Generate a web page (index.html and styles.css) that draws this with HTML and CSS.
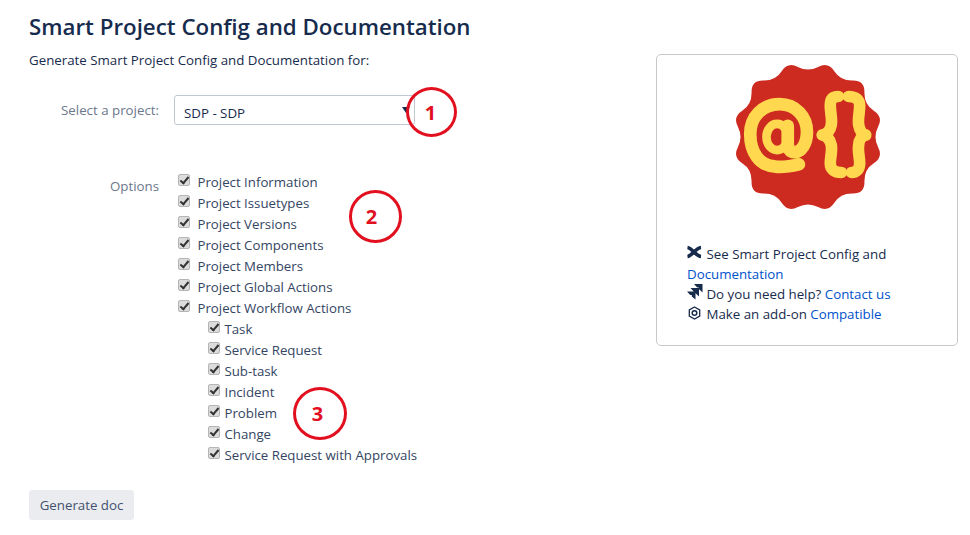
FILE: index.html
```html
<!DOCTYPE html>
<html lang="en">

<head>
  <meta charset="UTF-8">
  <title>Smart Project Config and Documentation</title>
  <link rel="stylesheet" href="styles.css">
</head>

<body>
  <div class="page">
    <div class="main">
      <h1>Smart Project Config and Documentation</h1>
      <p class="intro">Generate Smart Project Config and Documentation for:</p>
      <form class="doc-form">
        <div class="field-row">
          <label class="field-label select-label" for="project">Select a project:</label>
          <div class="select-wrap">
            <select id="project" class="project-select">
              <option>SDP - SDP</option>
            </select>
          </div>
        </div>
        <div class="field-row options-row">
          <div class="field-label options-label">Options</div>
          <div class="options">
            <label class="option"><input type="checkbox" checked> Project Information</label>
            <label class="option"><input type="checkbox" checked> Project Issuetypes</label>
            <label class="option"><input type="checkbox" checked> Project Versions</label>
            <label class="option"><input type="checkbox" checked> Project Components</label>
            <label class="option"><input type="checkbox" checked> Project Members</label>
            <label class="option"><input type="checkbox" checked> Project Global Actions</label>
            <label class="option"><input type="checkbox" checked> Project Workflow Actions</label>
            <div class="sub-options">
              <label class="option"><input type="checkbox" checked> Task</label>
              <label class="option"><input type="checkbox" checked> Service Request</label>
              <label class="option"><input type="checkbox" checked> Sub-task</label>
              <label class="option"><input type="checkbox" checked> Incident</label>
              <label class="option"><input type="checkbox" checked> Problem</label>
              <label class="option"><input type="checkbox" checked> Change</label>
              <label class="option"><input type="checkbox" checked> Service Request with Approvals</label>
            </div>
          </div>
        </div>
        <button type="button" class="generate">Generate doc</button>
      </form>
    </div>

    <div class="info-panel">
      <svg class="logo" viewBox="-75 -75 150 150" width="152" height="152">
        <path fill="#cd2a20" d="M10,-69.2 Q19.9,-74.4 26,-64.9 Q32,-55.4 44,-55.7 Q56,-56 55.7,-44 Q55.4,-32 64.9,-26 Q74.4,-19.9 69.2,-10 Q64,0 69.2,10 Q74.4,19.9 64.9,26 Q55.4,32 55.7,44 Q56,56 44,55.7 Q32,55.4 26,64.9 Q19.9,74.4 10,69.2 Q0,64 -10,69.2 Q-19.9,74.4 -26,64.9 Q-32,55.4 -44,55.7 Q-56,56 -55.7,44 Q-55.4,32 -64.9,26 Q-74.4,19.9 -69.2,10 Q-64,0 -69.2,-10 Q-74.4,-19.9 -64.9,-26 Q-55.4,-32 -55.7,-44 Q-56,-56 -44,-55.7 Q-32,-55.4 -26,-64.9 Q-19.9,-74.4 -10,-69.2 Q0,-64 10,-69.2Z" />
        <g fill="none" stroke="#ffd84f" stroke-linecap="round" stroke-linejoin="round">
          <path stroke-width="12.5" d="M-9,27 C-18,29 -27,30 -33,29 C-48,28 -57,15 -57,-3 C-57,-20 -45,-32.5 -28,-32.5 C-12,-32.5 -1,-20 -1,-5 C-1,7 -7,15 -13,15 C-18,15 -20,11 -20,6 L-20,-11" />
          <ellipse stroke-width="8.5" cx="-30.5" cy="0" rx="10.5" ry="13" />
          <path stroke-width="11.5" d="M30,-40 C24,-40 22,-37 22,-31 C22,-24 24,-18 23,-12 C22,-6 19,-3 14,-2 C19,-1 22,3 23,8 C24,14 22,20 22,26 C22,32 26,35 33,35" />
          <path stroke-width="11.5" d="M40,-40 C47,-40 51,-37 51,-31 C51,-24 49,-18 50,-12 C51,-6 53,-3 57,-2 C53,-1 50,3 50,8 C49,14 51,20 51,26 C51,32 48,35 43,35" />
        </g>
      </svg>
      <div class="links">
        <div>
          <svg class="link-icon" viewBox="0 0 16 16" width="16" height="16">
            <path fill="none" stroke="#172b4d" stroke-width="3.6" d="M0.5,3.5 C5,4 8.5,12 14,12.5 M0.5,12.5 C5,12 8.5,4 14,3.5" />
          </svg>
          See Smart Project Config and <a href="#">Documentation</a>
        </div>
        <div>
          <svg class="link-icon" viewBox="0 0 16 16" width="16" height="16">
            <path fill="#172b4d" d="M7,0 H15.5 V8.5 L11.8,5 V3.4 H10.2Z M3.5,4 H12 V12.5 L8.3,9 V7.4 H6.7Z M0,7.5 H8.5 V15.5 L4.8,12.5 V10.9 H3.2Z" />
          </svg>
          Do you need help? <a href="#">Contact us</a>
        </div>
        <div>
          <svg class="link-icon" viewBox="0 0 16 16" width="16" height="16">
            <path fill="none" stroke="#172b4d" stroke-width="1.3" d="M7.5,3 L12.7,6 V12 L7.5,15 L2.3,12 V6Z" />
            <circle fill="none" stroke="#172b4d" stroke-width="1.5" cx="7.5" cy="9" r="2.3" />
          </svg>
          Make an add-on <a href="#">Compatible</a>
        </div>
      </div>
    </div>
  </div>

  <div class="callout callout-one"><span>1</span></div>
  <div class="callout callout-two"><span>2</span></div>
  <div class="callout callout-three"><span>3</span></div>
</body>

</html>
```

FILE: styles.css
```css
body {
  margin: 0;
  font-family: "Open Sans", "Noto Sans", sans-serif;
  font-size: 13.3px;
  color: #172b4d;
  background-color: #ffffff;
}

.page {
  display: flex;
  justify-content: space-between;
  padding: 0 12px 0 29px;
}

h1 {
  margin: 12px 0 0 0;
  font-size: 22.3px;
  line-height: 30px;
  font-weight: 600;
}

.intro {
  margin: 8px 0 0 0;
  line-height: 20px;
}

.doc-form {
  margin-top: 25px;
}

.field-row {
  display: flex;
}

.field-label {
  width: 130px;
  margin-right: 15px;
  text-align: right;
  color: #6b778c;
}

.select-label {
  padding-top: 5px;
  line-height: 20px;
}

.select-wrap {
  position: relative;
  width: 241px;
}

.select-wrap::after {
  content: "";
  position: absolute;
  top: 12px;
  right: 5px;
  border-left: 4px solid transparent;
  border-right: 4px solid transparent;
  border-top: 6px solid #172b4d;
}

.project-select {
  display: block;
  width: 100%;
  height: 30px;
  padding: 6px 20px 0 9px;
  border: 1px solid #c1c7d0;
  border-radius: 3px;
  background-color: #ffffff;
  appearance: none;
  font-family: inherit;
  font-size: 13.3px;
  color: #172b4d;
}

.options-row {
  margin-top: 45px;
}

.options-label {
  padding-top: 6px;
  line-height: 20px;
}

.options {
  padding-top: 1px;
  padding-left: 4px;
}

.option {
  display: flex;
  align-items: center;
  height: 21px;
  font-size: 13.25px;
  color: #344563;
  white-space: pre;
}

.option input {
  appearance: none;
  width: 12px;
  height: 12px;
  margin: 0 4px 4px 0;
  border: 1px solid #b5b5b5;
  border-radius: 2px;
  background-color: #dcdcdc;
  position: relative;
}

.option input::after {
  content: "";
  position: absolute;
  left: 3px;
  top: 0;
  width: 3px;
  height: 7px;
  border: solid #333333;
  border-width: 0 2px 2px 0;
  transform: rotate(40deg);
}

.sub-options {
  padding-left: 30px;
}

.sub-options .option input {
  margin-right: 1px;
}

.generate {
  display: block;
  margin-top: 25px;
  width: 105px;
  height: 30px;
  padding: 0;
  border: none;
  border-radius: 3px;
  background-color: #ebecf0;
  font-family: inherit;
  font-size: 13.3px;
  color: #42526e;
}

.info-panel {
  box-sizing: border-box;
  width: 302px;
  height: 292px;
  margin-top: 54px;
  padding: 6px 30px 0 30px;
  border: 1px solid #c9c9c9;
  border-radius: 5px;
}

.logo {
  display: block;
  margin-left: 45px;
}

.links {
  margin-top: 31px;
  line-height: 20px;
}

.link-icon {
  vertical-align: -1px;
}

a {
  color: #0052cc;
  text-decoration: none;
}

/* annotations drawn over the screenshot */
.callout {
  position: absolute;
  box-sizing: border-box;
  display: flex;
  justify-content: center;
  align-items: center;
  border: 3px solid #e2101f;
  border-radius: 50%;
  font-family: "Open Sans", sans-serif;
  font-size: 20px;
  font-weight: 700;
  color: #e2101f;
}

.callout-one {
  left: 406px;
  top: 87px;
  width: 51px;
  height: 50px;
  padding-right: 2px;
}

.callout-two {
  left: 349px;
  top: 190px;
  width: 53px;
  height: 53px;
  padding-right: 8px;
}

.callout-three {
  left: 293px;
  top: 387px;
  width: 54px;
  height: 53px;
  padding-right: 5px;
}
```
